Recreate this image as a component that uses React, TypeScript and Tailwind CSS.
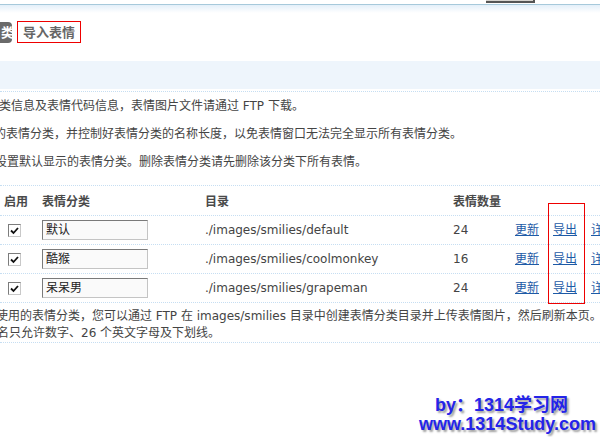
const FONT = '"DejaVu Sans", "Noto Sans CJK SC", sans-serif';

const rows = [
  { name: '默认', dir: './images/smilies/default', count: 24 },
  { name: '酷猴', dir: './images/smilies/coolmonkey', count: 16 },
  { name: '呆呆男', dir: './images/smilies/grapeman', count: 24 },
];

function Check() {
  return (
    <span className="inline-flex w-[13px] h-[13px] items-center justify-center border border-[#7c7c7c] border-b-[#c8c8c8] border-r-[#c8c8c8] bg-white">
      <svg width="9" height="9" viewBox="0 0 9 9">
        <path d="M1 4.5 L3.5 7 L8 2" fill="none" stroke="#111" strokeWidth="1.8" />
      </svg>
    </span>
  );
}

export default function App() {
  return (
    <div
      className="relative w-[600px] h-[437px] overflow-hidden bg-white text-[12px] text-[#444]"
      style={{ fontFamily: FONT }}
    >
      {/* top strip with the cut-off button */}
      <div className="h-[4px] flex">
        <div className="ml-[486px] w-[49px] h-[3px] bg-[#d6d3ce] border-r-2 border-b-2 border-[#555]" />
      </div>
      <div className="h-px bg-[#a6c9db]" />
      <div className="h-[8px] bg-linear-to-b from-[#e3eff9] to-white" />

      {/* tabs */}
      <div className="pt-[8px] pb-[18px] flex items-center gap-[5px]">
        <span className="-ml-[12px] h-[21px] w-[24px] shrink-0 rounded-[4px] bg-[#6a6a6a] text-white font-bold text-[13px] flex items-center justify-end -indent-[2px] leading-none overflow-hidden">
          <span className="-mr-[2px]">类</span>
        </span>
        <span className="h-[22px] w-[64px] shrink-0 border border-[#ee0000] text-[#666] font-bold text-[13px] flex items-center justify-center leading-none">
          导入表情
        </span>
      </div>

      <div className="h-[28px] bg-[#eef5fc]" />
      <div className="h-[2px]" />

      {/* tips */}
      <div className="border-y border-dotted border-[#c6def2] pb-[9px]">
        <p className="h-[28px] flex items-center -ml-[1px] whitespace-nowrap">
          类信息及表情代码信息，表情图片文件请通过 FTP 下载。
        </p>
        <p className="h-[28px] flex items-center -ml-[6px] whitespace-nowrap">
          的表情分类，并控制好表情分类的名称长度，以免表情窗口无法完全显示所有表情分类。
        </p>
        <p className="h-[28px] flex items-center -ml-[5px] whitespace-nowrap">
          设置默认显示的表情分类。删除表情分类请先删除该分类下所有表情。
        </p>
      </div>

      {/* table */}
      <div className="relative">
        <div className="h-[30px] flex items-center pt-[3px] border-b border-dotted border-[#c6def2] font-bold text-[#4a4a4a] whitespace-nowrap">
          <span className="w-[42px] shrink-0 pl-[4px]">启用</span>
          <span className="w-[163px] shrink-0">表情分类</span>
          <span className="w-[248px] shrink-0">目录</span>
          <span className="w-[62px] shrink-0">表情数量</span>
        </div>
        {rows.map((r) => (
          <div
            key={r.dir}
            className="h-[29px] flex items-center border-b border-dotted border-[#c6def2] whitespace-nowrap"
          >
            <span className="w-[42px] shrink-0 pl-[8px] flex">
              <Check />
            </span>
            <span className="w-[163px] shrink-0">
              <span className="flex items-center w-[106px] h-[20px] pl-[3px] border border-[#7a7a7a] border-b-[#c4c4c4] border-r-[#c4c4c4] bg-[#fafafa] text-[#222]">
                {r.name}
              </span>
            </span>
            <span className="w-[248px] shrink-0">{r.dir}</span>
            <span className="w-[62px] shrink-0">{r.count}</span>
            <a className="w-[38px] shrink-0 text-[#1d5aa6] underline">更新</a>
            <a className="w-[38px] shrink-0 text-[#1d5aa6] underline">导出</a>
            <a className="shrink-0 text-[#1d5aa6] underline">详情</a>
          </div>
        ))}
        <div className="absolute left-[548px] top-[17px] w-[37px] h-[101px] border border-[#ee0000]" />
      </div>

      {/* footer tips */}
      <div className="h-[40px] pt-[5px] border-b border-dotted border-[#c6def2] leading-[17px] whitespace-nowrap">
        <p className="-ml-[4px]">
          使用的表情分类，您可以通过 FTP 在 images/smilies 目录中创建表情分类目录并上传表情图片，然后刷新本页。
        </p>
        <p className="-ml-[3px]">名只允许数字、26 个英文字母及下划线。</p>
      </div>

      {/* watermark */}
      <div
        className="absolute left-[419px] top-[396px] font-bold text-[18px] leading-[19px] text-[#2424e8] [text-shadow:2px_2px_2px_#a0a0a0] whitespace-nowrap"
        style={{ fontFamily: '"Liberation Sans", "Noto Sans CJK SC", sans-serif' }}
      >
        <div className="pl-[16px]">by：1314学习网</div>
        <div>www.1314Study.com</div>
      </div>
    </div>
  );
}
